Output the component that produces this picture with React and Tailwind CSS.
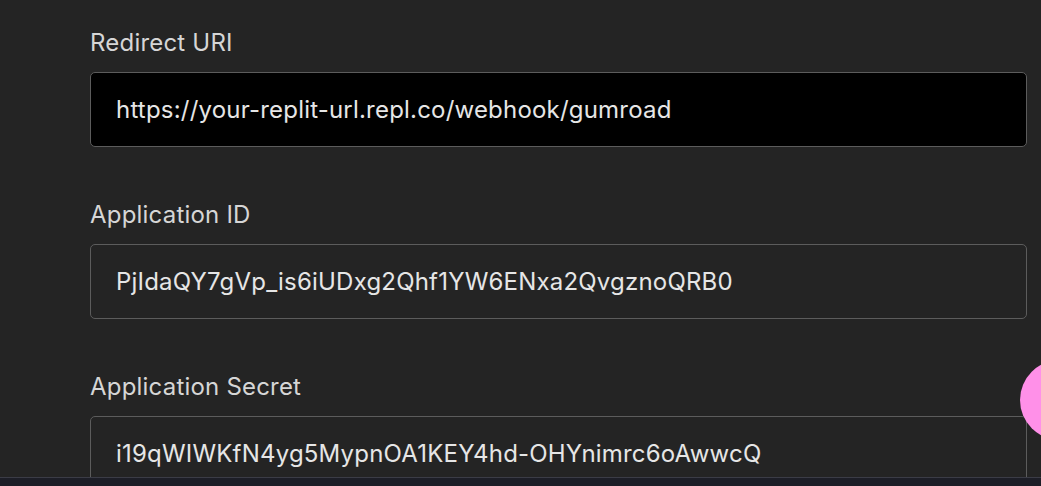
const fields = [
  { label: "Redirect URI", value: "https://your-replit-url.repl.co/webhook/gumroad", focused: true },
  { label: "Application ID", value: "PjIdaQY7gVp_is6iUDxg2Qhf1YW6ENxa2QvgznoQRB0" },
  { label: "Application Secret", value: "i19qWIWKfN4yg5MypnOA1KEY4hd-OHYnimrc6oAwwcQ" },
];

export default function App() {
  return (
    <div className="relative h-[486px] w-[1041px] overflow-hidden bg-[#242424] font-['Inter',sans-serif] tracking-[0.2px]">
      <div className="flex flex-col gap-[52px] pl-[90px] pr-[14px] pt-[27px]">
        {fields.map((f) => (
          <div key={f.label} className="flex flex-col">
            <label className="mb-[13px] text-[24px] leading-[32px] text-[#d6d6d6]">{f.label}</label>
            <div
              className={`flex h-[75px] items-center rounded-[5px] border border-[#5c5c5c] pl-[25px] text-[24px] text-[#e6e6e6] ${
                f.focused ? "bg-black" : "bg-transparent"
              }`}
            >
              {f.value}
            </div>
          </div>
        ))}
      </div>

      {/* floating help bubble */}
      <div className="absolute left-[1020px] top-[360px] h-[80px] w-[80px] rounded-full bg-[#ff90e8]" />

      {/* bottom strip */}
      <div className="absolute bottom-0 left-0 h-[9px] w-full border-t border-[#3b3c46] bg-[#1d1e27]" />
    </div>
  );
}
